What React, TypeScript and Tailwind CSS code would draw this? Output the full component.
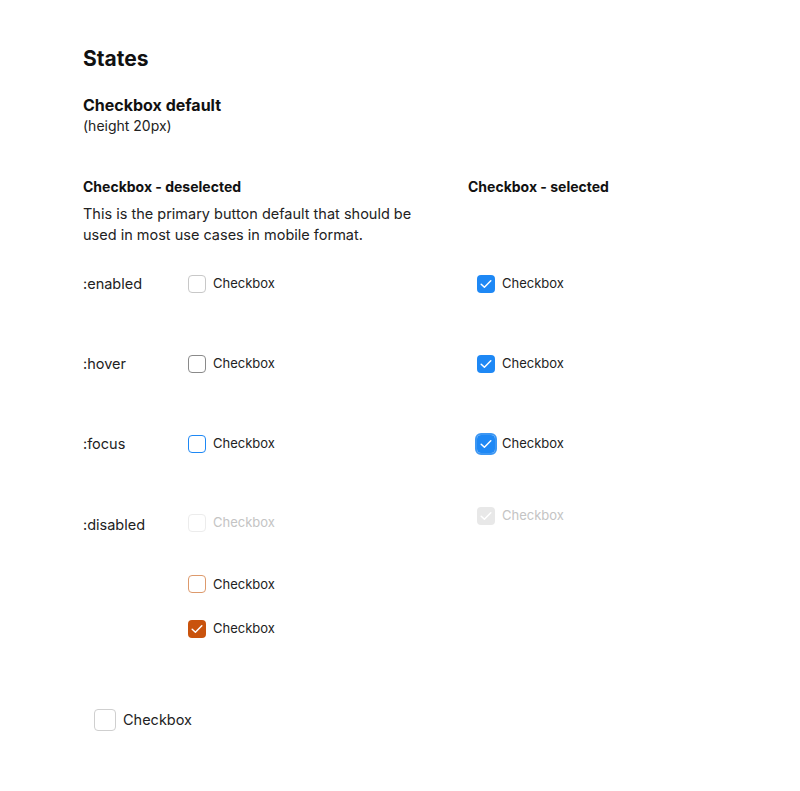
import React from 'react';

type Variant = 'enabled' | 'hover' | 'focus' | 'disabled' | 'warn';

function CheckIcon({ className }: { className: string }) {
  return (
    <svg viewBox="0 0 16 16" className={className} fill="none">
      <path d="M3.2 8.2l3.2 3 6.4-6.4" stroke="currentColor" strokeWidth="1.5" strokeLinecap="round" strokeLinejoin="round" />
    </svg>
  );
}

function Box({ variant, checked }: { variant: Variant; checked?: boolean }) {
  if (checked) {
    const tone =
      variant === 'disabled'
        ? 'bg-[#e8e8e8] text-white'
        : variant === 'warn'
        ? 'bg-[#c9530d] text-white'
        : 'bg-[#1e88f5] text-white';
    const ring = variant === 'focus' ? 'outline-2 outline-solid outline-[#3d97f3]' : '';
    return (
      <span className={`flex h-[18px] w-[18px] shrink-0 items-center justify-center rounded-[4px] ${tone} ${ring}`}>
        <CheckIcon className="h-[16px] w-[16px]" />
      </span>
    );
  }
  const border =
    variant === 'hover'
      ? 'border-[#8a8a8a]'
      : variant === 'focus'
      ? 'border-[#1e88f5] border-[1.5px]'
      : variant === 'disabled'
      ? 'border-[#ececec]'
      : variant === 'warn'
      ? 'border-[#dd9a6c]'
      : 'border-[#c8c8c8]';
  return <span className={`h-[18px] w-[18px] shrink-0 rounded-[4px] border bg-white ${border}`} />;
}

function Checkbox({ variant, checked }: { variant: Variant; checked?: boolean }) {
  return (
    <div className="flex items-center gap-[7px]">
      <Box variant={variant} checked={checked} />
      <span className={`text-[13px] ${variant === 'disabled' ? 'text-[#c4c4c4]' : 'text-[#222]'}`}>Checkbox</span>
    </div>
  );
}

const rows: { label: string; variant: Variant }[] = [
  { label: ':enabled', variant: 'enabled' },
  { label: ':hover', variant: 'hover' },
  { label: ':focus', variant: 'focus' },
];

export default function App() {
  return (
    <div className="min-h-[791px] bg-white pl-[83px] pt-[45px] text-[#111]" style={{ fontFamily: 'Inter, "Noto Sans", sans-serif' }}>
      <h1 className="text-[21px] font-bold leading-[28px]">States</h1>

      <div className="mt-[22px]">
        <h2 className="text-[16px] font-bold leading-[20px]">Checkbox default</h2>
        <p className="text-[14px] leading-[22px] text-[#222]">(height 20px)</p>
      </div>

      <div className="mt-[40px] grid grid-cols-[385px_1fr]">
        <div>
          <h3 className="text-[14px] font-bold leading-[20px]">Checkbox - deselected</h3>
          <p className="mt-[6px] w-[340px] text-[14.5px] leading-[21px] text-[#222]">
            This is the primary button default that should be used in most use cases in mobile format.
          </p>
        </div>
        <h3 className="text-[14px] font-bold leading-[20px]">Checkbox - selected</h3>
      </div>

      <div className="mt-[28px] flex flex-col gap-[60px]">
        {rows.map((r) => (
          <div key={r.label} className="grid h-[20px] grid-cols-[105px_289px_1fr] items-center">
            <span className="text-[14.5px] text-[#222]">{r.label}</span>
            <Checkbox variant={r.variant} />
            <Checkbox variant={r.variant} checked />
          </div>
        ))}

        <div className="grid grid-cols-[105px_289px_1fr] items-start">
          <span className="mt-[1px] text-[14.5px] text-[#222]">:disabled</span>
          <div className="flex flex-col gap-[42px]">
            <Checkbox variant="disabled" />
            <Checkbox variant="warn" />
            <div className="-mt-[17px]">
              <Checkbox variant="warn" checked />
            </div>
          </div>
          <div className="-mt-[7px]">
            <Checkbox variant="disabled" checked />
          </div>
        </div>
      </div>

      <div className="mt-[70px] flex items-center gap-[7px] pl-[11px]">
        <span className="h-[22px] w-[22px] rounded-[4px] border border-[#cfcfcf] bg-white" />
        <span className="text-[14.5px] text-[#222]">Checkbox</span>
      </div>
    </div>
  );
}
